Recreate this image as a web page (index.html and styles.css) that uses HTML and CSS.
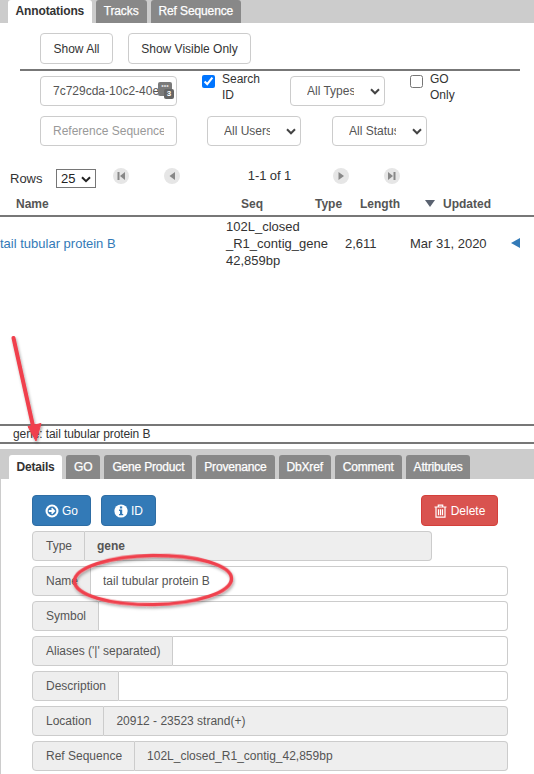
FILE: index.html
```html
<!DOCTYPE html>
<html lang="en">
<head>
<meta charset="utf-8">
<title>Annotations</title>
<link rel="stylesheet" href="styles.css">
</head>
<body>
<div class="page">
  <nav class="tabs tabs-top">
    <a class="tab tab-active">Annotations</a>
    <a class="tab">Tracks</a>
    <a class="tab">Ref Sequence</a>
  </nav>

  <div class="toolbar">
    <button class="btn-light btn-all">Show All</button>
    <button class="btn-light btn-visible">Show Visible Only</button>
  </div>
  <div class="rule"></div>

  <div class="filter-row filter-one">
    <div class="search-wrap">
      <input class="field field-search" type="text" value="7c729cda-10c2-40e0-8d5a">
      <span class="pw-icon"><span class="pw-dots">•••</span><span class="pw-badge">3</span></span>
    </div>
    <label class="check check-search"><input type="checkbox" checked><span>Search<br>ID</span></label>
    <div class="select-wrap sel-types">
      <select class="select"><option>All Types</option></select>
      <svg class="chev" viewBox="0 0 10 7"><path d="M1 1.3 5 5.3 9 1.3" fill="none" stroke="#444" stroke-width="2"/></svg>
    </div>
    <label class="check check-go"><input type="checkbox"><span>GO<br>Only</span></label>
  </div>

  <div class="filter-row filter-two">
    <input class="field field-ref" type="text" placeholder="Reference Sequence">
    <div class="select-wrap sel-users">
      <select class="select"><option>All Users</option></select>
      <svg class="chev" viewBox="0 0 10 7"><path d="M1 1.3 5 5.3 9 1.3" fill="none" stroke="#444" stroke-width="2"/></svg>
    </div>
    <div class="select-wrap sel-status">
      <select class="select"><option>All Status</option></select>
      <svg class="chev" viewBox="0 0 10 7"><path d="M1 1.3 5 5.3 9 1.3" fill="none" stroke="#444" stroke-width="2"/></svg>
    </div>
  </div>

  <div class="pager-row">
    <span class="rows-label">Rows</span>
    <div class="rows-select"><span>25</span>
      <svg class="rows-chev" viewBox="0 0 10 7"><path d="M1 1.2 5 5.2 9 1.2" fill="none" stroke="#222" stroke-width="2"/></svg>
    </div>
    <span class="pg pg-first"><svg viewBox="0 0 16 16"><path d="M4.5 4h2v8h-2zM12 4v8L7 8z"/></svg></span>
    <span class="pg pg-prev"><svg viewBox="0 0 16 16"><path d="M11 4v8L5.5 8z"/></svg></span>
    <span class="pg-count">1-1 of 1</span>
    <span class="pg pg-next"><svg viewBox="0 0 16 16"><path d="M5.5 4v8L11 8z"/></svg></span>
    <span class="pg pg-last"><svg viewBox="0 0 16 16"><path d="M4 4v8l5-4zM9.5 4h2v8h-2z"/></svg></span>
  </div>

  <div class="thead">
    <span class="th th-name">Name</span>
    <span class="th th-seq">Seq</span>
    <span class="th th-type">Type</span>
    <span class="th th-length">Length</span>
    <span class="sort-tri"></span>
    <span class="th">Updated</span>
  </div>

  <div class="list">
    <div class="trow">
      <a class="td-name">tail tubular protein B</a>
      <div class="td-seq">102L_closed<br>_R1_contig_gene<br>42,859bp</div>
      <div class="td-length">2,611</div>
      <div class="td-date">Mar 31, 2020</div>
      <span class="row-arrow"></span>
    </div>
  </div>

  <div class="title-bar">gene: tail tubular protein B</div>

  <nav class="tabs tabs-detail">
    <a class="tab tab-active">Details</a>
    <a class="tab">GO</a>
    <a class="tab">Gene Product</a>
    <a class="tab">Provenance</a>
    <a class="tab">DbXref</a>
    <a class="tab">Comment</a>
    <a class="tab">Attributes</a>
  </nav>

  <section class="detail">
    <div class="actions">
      <button class="btn btn-blue btn-go">
        <svg class="ico" viewBox="0 0 14 14"><circle cx="7" cy="7" r="6.5" fill="#fff"/><circle cx="7" cy="7" r="4.4" fill="#337ab7"/><path d="M7.2 3.8 10.4 7 7.2 10.2 6 9 7.1 7.9H3.8V6.1H7.1L6 5z" fill="#fff"/></svg>Go
      </button>
      <button class="btn btn-blue btn-id">
        <svg class="ico" viewBox="0 0 14 14"><circle cx="7" cy="7" r="6.6" fill="#fff"/><rect x="5.9" y="2.4" width="2.3" height="2.1" fill="#337ab7"/><path d="M5 5.6H8.2V10H9.2V11.3H5V10H6V6.9H5z" fill="#337ab7"/></svg>ID
      </button>
      <button class="btn btn-red">
        <svg class="ico ico-trash" viewBox="0 0 13 14"><path d="M.5 3h12M4.3 3V1.2h4.4V3M2 3v10.2h9V3M4.5 5.2v6M6.5 5.2v6M8.5 5.2v6" fill="none" stroke="#fff" stroke-width="1.2"/></svg>Delete
      </button>
    </div>

    <div class="group group-type"><span class="addon">Type</span><span class="value value-ro value-bold">gene</span></div>
    <div class="group"><span class="addon">Name</span><input class="value" type="text" value="tail tubular protein B"></div>
    <div class="group"><span class="addon">Symbol</span><input class="value" type="text"></div>
    <div class="group"><span class="addon">Aliases ('|' separated)</span><input class="value" type="text"></div>
    <div class="group"><span class="addon">Description</span><input class="value" type="text"></div>
    <div class="group"><span class="addon">Location</span><span class="value value-ro">20912 - 23523 strand(+)</span></div>
    <div class="group"><span class="addon">Ref Sequence</span><span class="value value-ro">102L_closed_R1_contig_42,859bp</span></div>
  </section>

  <svg class="markup" viewBox="0 0 534 774" width="534" height="774">
    <defs>
      <filter id="sh" x="-20%" y="-20%" width="140%" height="140%">
        <feDropShadow dx="1" dy="2" stdDeviation="1.6" flood-color="#000" flood-opacity=".35"/>
      </filter>
    </defs>
    <g filter="url(#sh)">
      <path d="M13.5 338 33 426" fill="none" stroke="#f0414d" stroke-width="4" stroke-linecap="round"/>
      <path d="M28 426.5 41 423.5 36 441z" fill="#f0414d" stroke="#f0414d" stroke-width="1" stroke-linejoin="round"/>
      <ellipse cx="153" cy="580" rx="78.5" ry="24.5" transform="rotate(-1 153 580)" fill="none" stroke="#f0414d" stroke-width="3.5"/>
    </g>
  </svg>
</div>
</body>
</html>
```

FILE: styles.css
```css
* { box-sizing: border-box; }
html, body { margin: 0; padding: 0; background: #fff; }
body { font-family: "Liberation Sans", Arial, sans-serif; font-size: 12px; color: #333; }
button, input, select { font-family: inherit; font-size: 12px; margin: 0; }

.page { position: relative; width: 534px; height: 774px; overflow: hidden; }

/* tabs */
.tabs { display: flex; gap: 4px; background: #ccc; align-items: flex-end; }
.tabs-top { height: 23px; padding-left: 8px; }
.tabs-detail { height: 30px; padding-left: 9px; margin-top: 5px; }
.tab { display: block; height: 23px; line-height: 22px; padding: 0 8px; background: #888; color: #fff; font-size: 12px; letter-spacing: -.12px; -webkit-text-stroke: .25px #fff; border-radius: 3px 3px 0 0; }
.tabs-detail .tab { height: 24px; line-height: 25px; letter-spacing: -.18px; }
.tab-active { background: #fff; color: #333; font-weight: bold; -webkit-text-stroke: 0; }
.tabs .tab-active { padding: 0 7.5px; }

/* toolbar */
.toolbar { display: flex; padding: 10px 0 0 40px; gap: 15px; }
.btn-light { height: 31px; background: #fff; border: 1px solid #ccc; border-radius: 4px; color: #333; padding: 0 12px; }
.btn-all { width: 73px; }
.btn-visible { width: 123px; }
.rule { height: 2px; margin: 5px 14px 0 20px; background: #777; }

/* filters */
.filter-row { display: flex; padding-left: 40px; }
.filter-one { margin-top: 5px; height: 30px; }
.filter-two { margin-top: 10px; height: 30px; }
.field { height: 30px; width: 137px; border: 1px solid #ccc; border-radius: 4px; padding: 0 12px; color: #555; background: #fff; outline: 0; }
.field::placeholder { color: #999; opacity: 1; }
.search-wrap { position: relative; width: 137px; height: 30px; }
.pw-icon { position: absolute; left: 118px; top: 6px; width: 14px; height: 14px; background: #7a7a7a; border-radius: 2px; }
.pw-dots { display: block; font-size: 7px; line-height: 8px; color: #ddd; text-align: center; overflow: hidden; }
.pw-badge { position: absolute; right: -2px; bottom: -3px; width: 10px; height: 10px; background: #666; border-radius: 2px; color: #fff; font-size: 8px; line-height: 10px; font-weight: bold; text-align: center; }

.check { display: flex; line-height: 16px; color: #333; margin-top: -1px; }
.check input { width: 13px; height: 13px; margin: 0 7px 0 0; accent-color: #0075ff; }
.check span { margin-top: -4px; }
.check-search { margin-left: 25px; width: 88px; }
.check-go { margin-left: 25px; }

.select-wrap { position: relative; height: 30px; }
.select { appearance: none; -webkit-appearance: none; width: 100%; height: 30px; background: #fff; border: 1px solid #ccc; border-radius: 4px; padding: 0 30px 0 16px; color: #555; outline: 0; }
.chev { position: absolute; right: 5px; top: 12px; width: 10px; height: 7px; }
.sel-types { width: 95px; }
.sel-users { width: 94px; margin-left: 30px; }
.sel-status { width: 95px; margin-left: 31px; }

/* pager */
.pager-row { display: flex; align-items: center; height: 20px; margin-top: 22px; padding-left: 10px; }
.rows-label { font-size: 13px; width: 46px; }
.rows-select { width: 40px; height: 19px; border: 1px solid #767676; color: #222; font-size: 13px; line-height: 17px; padding-left: 4px; position: relative; }
.rows-chev { position: absolute; right: 4px; top: 6px; width: 10px; height: 7px; }
.pg { width: 16px; height: 16px; border-radius: 50%; background: #e6e6e6; display: block; margin-top: -4px; }
.pg svg { display: block; width: 16px; height: 16px; fill: #888; }
.pg-first { margin-left: 17px; }
.pg-prev { margin-left: 35px; }
.pg-count { width: 153px; text-align: center; margin-top: -5px; font-size: 13px; padding-left: 26px; letter-spacing: -.1px; }
.pg-last { margin-left: 35px; }

/* table */
.thead { display: flex; align-items: center; height: 19px; margin-top: 6px; padding-left: 16px; font-weight: bold; color: #555; }
.th-name { width: 225px; }
.th-seq { width: 74px; }
.th-type { width: 45px; }
.th-length { width: 65px; }
.sort-tri { width: 18px; height: 0; }
.sort-tri::before { content: ""; display: block; width: 0; border-left: 5px solid transparent; border-right: 5px solid transparent; border-top: 7px solid #5a6270; margin-top: -4px; }
.list { height: 209px; border-top: 2px solid #777; margin-top: 2px; }
.trow { display: flex; align-items: center; height: 52px; font-size: 13px; }
.td-name { width: 225px; color: #337ab7; }
.td-seq { width: 120px; line-height: 17px; padding-left: 1px; }
.td-length { width: 65px; }
.td-date { width: 101px; }
.row-arrow { width: 0; border-top: 5px solid transparent; border-bottom: 5px solid transparent; border-right: 9px solid #337ab7; }

.title-bar { height: 20px; border-top: 2px solid #777; border-bottom: 2px solid #777; line-height: 17px; padding-left: 13px; background: #fff; color: #333; letter-spacing: -.1px; }

/* detail */
.detail { height: 295px; border-left: 1px solid #ccc; padding: 16px 26px 0 31px; }
.actions { display: flex; height: 31px; margin-bottom: 5px; }
.btn { display: flex; align-items: center; justify-content: center; height: 31px; border-radius: 4px; color: #fff; border: 1px solid; padding: 0; }
.btn-blue { background: #337ab7; border-color: #2e6da4; }
.btn-red { background: #d9534f; border-color: #d43f3a; width: 77px; margin-left: auto; margin-right: 10px; }
.btn-go { width: 59px; }
.btn-id { width: 55px; margin-left: 10px; }
.ico { width: 14px; height: 14px; margin-right: 3px; }
.ico-trash { width: 13px; margin-right: 4px; }

.group { display: flex; height: 30px; margin-bottom: 5px; }
.group-type { width: 400px; }
.addon { height: 30px; line-height: 28px; padding: 0 12px 0 13px; background: #eee; border: 1px solid #ccc; border-radius: 4px 0 0 4px; color: #555; white-space: nowrap; }
.value { flex: 1; min-width: 0; height: 30px; line-height: 28px; padding: 0 12px; border: 1px solid #ccc; border-left: 0; border-radius: 0 4px 4px 0; background: #fff; color: #555; outline: 0; }
.value-ro { background: #eee; }
.value-bold { font-weight: bold; }

/* hand-drawn markup over the screenshot */
.markup { position: absolute; left: 0; top: 0; pointer-events: none; }
```
